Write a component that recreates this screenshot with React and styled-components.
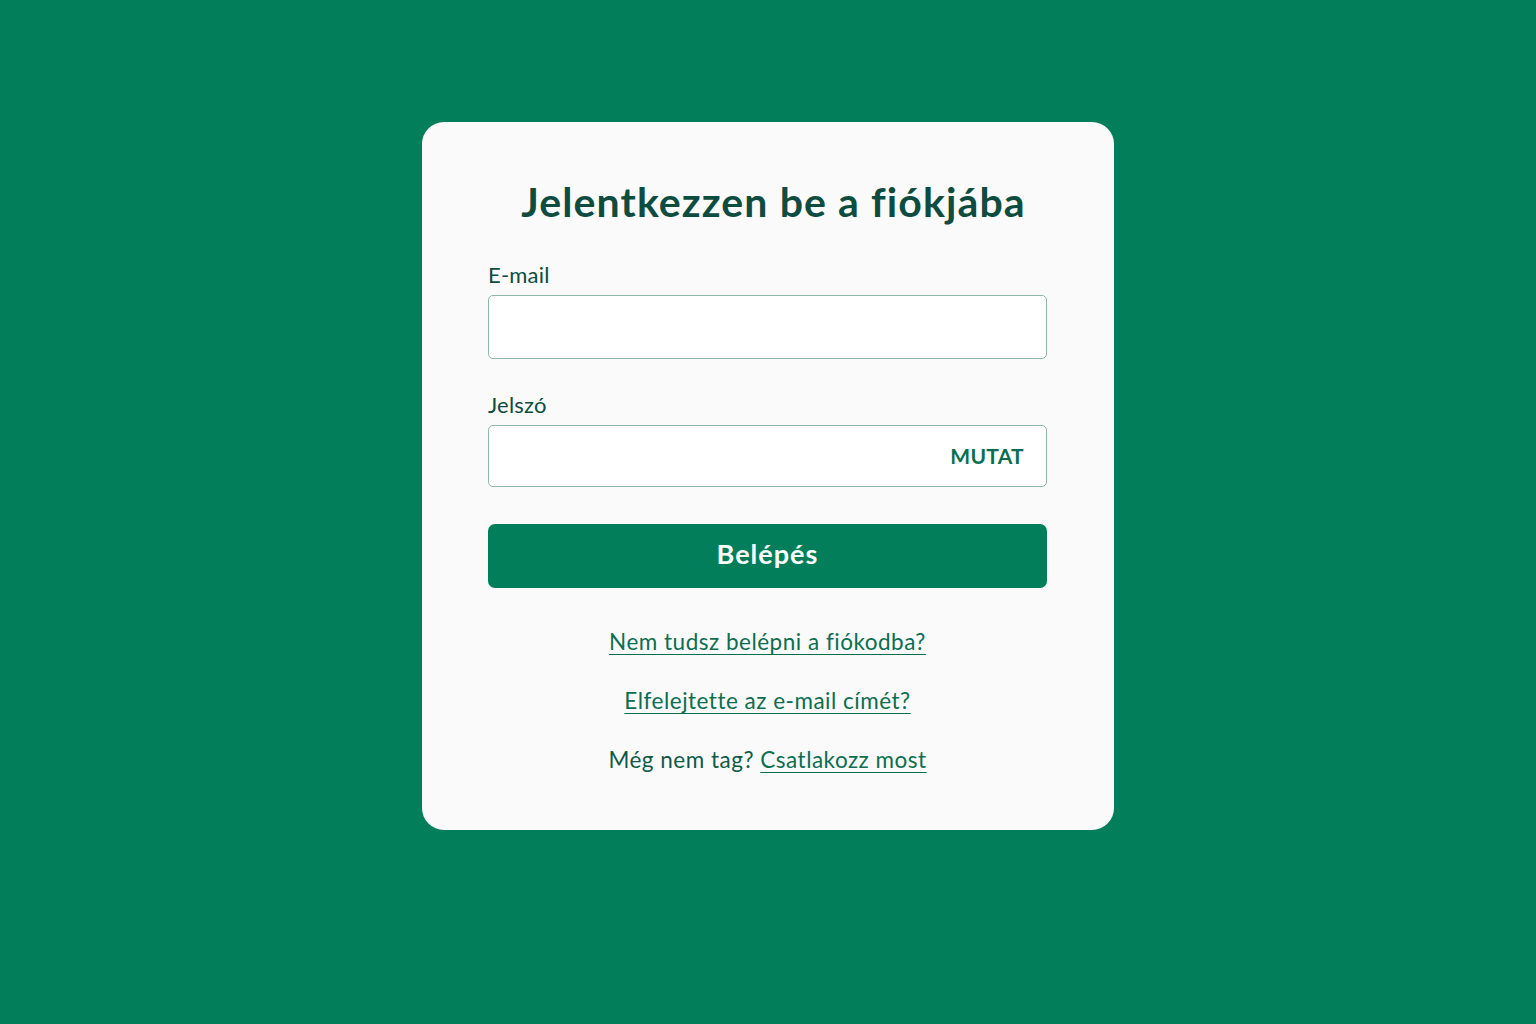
import React from "react";
import styled, { createGlobalStyle } from "styled-components";

const Global = createGlobalStyle`
  html, body { margin: 0; padding: 0; }
  body { background: #037e5a; font-family: Lato, "Open Sans", sans-serif; }
`;

const Page = styled.div`
  min-height: 1024px;
  display: flex;
  justify-content: center;
  align-items: flex-start;
  padding-top: 122px;
  box-sizing: border-box;
`;

const Card = styled.div`
  width: 692px;
  height: 708px;
  box-sizing: border-box;
  background: #fafafa;
  border-radius: 22px;
  padding: 56px 67px 0 66px;
  display: flex;
  flex-direction: column;
`;

const Title = styled.h1`
  margin: 0 0 0 12px;
  text-align: center;
  font-size: 41px;
  font-weight: 700;
  line-height: 48px;
  color: #0f4c40;
  letter-spacing: 1.1px;
`;

const Field = styled.div`
  display: flex;
  flex-direction: column;
  margin-top: ${(p) => p.$mt}px;
`;

const Label = styled.label`
  font-size: 22px;
  line-height: 26px;
  color: #0f4c40;
  margin-bottom: 7px;
  letter-spacing: 0.2px;
`;

const InputWrap = styled.div`
  position: relative;
  height: ${(p) => p.$h}px;
  box-sizing: border-box;
  border: 1px solid #8db5ab;
  border-radius: 5px;
  background: #ffffff;
  display: flex;
  align-items: center;
`;

const Input = styled.input`
  flex: 1;
  height: 100%;
  border: none;
  outline: none;
  background: transparent;
  padding: 0 16px;
  font-size: 20px;
  font-family: inherit;
`;

const Show = styled.button`
  border: none;
  background: transparent;
  color: #0b6e50;
  font-family: inherit;
  font-weight: 700;
  font-size: 21px;
  padding: 0 22px 2px 0;
  cursor: pointer;
  letter-spacing: 0.3px;
`;

const Submit = styled.button`
  margin-top: 37px;
  height: 64px;
  padding: 0 0 5px;
  border: none;
  border-radius: 7px;
  background: #037e5a;
  color: #ffffff;
  font-family: inherit;
  font-size: 27px;
  font-weight: 700;
  letter-spacing: 1px;
  cursor: pointer;
`;

const Links = styled.div`
  margin-top: 41px;
  display: flex;
  flex-direction: column;
  align-items: center;
  gap: 33px;
`;

const Line = styled.div`
  font-size: 22.5px;
  line-height: 26px;
  letter-spacing: 0.5px;
  color: #0f5a47;
  text-align: center;
`;

const Link = styled.a`
  color: #0b6e50;
  text-decoration: underline;
  text-underline-offset: 4px;
  text-decoration-thickness: 1px;
  cursor: pointer;
`;

export default function App() {
  return (
    <>
      <Global />
      <Page>
        <Card>
          <Title>Jelentkezzen be a fiókjába</Title>
          <Field $mt={36}>
            <Label>E-mail</Label>
            <InputWrap $h={64}>
              <Input type="email" />
            </InputWrap>
          </Field>
          <Field $mt={33}>
            <Label>Jelszó</Label>
            <InputWrap $h={62}>
              <Input type="password" />
              <Show>MUTAT</Show>
            </InputWrap>
          </Field>
          <Submit>Belépés</Submit>
          <Links>
            <Line><Link>Nem tudsz belépni a fiókodba?</Link></Line>
            <Line><Link>Elfelejtette az e-mail címét?</Link></Line>
            <Line>Még nem tag? <Link>Csatlakozz most</Link></Line>
          </Links>
        </Card>
      </Page>
    </>
  );
}
